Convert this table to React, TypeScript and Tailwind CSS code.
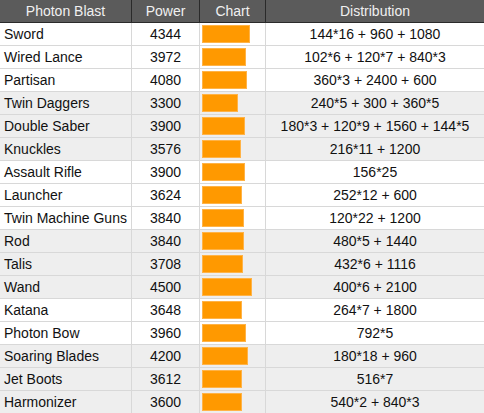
const rows: [string, number, string, boolean][] = [
  ["Sword", 4344, "144*16 + 960 + 1080", false],
  ["Wired Lance", 3972, "102*6 + 120*7 + 840*3", false],
  ["Partisan", 4080, "360*3 + 2400 + 600", false],
  ["Twin Daggers", 3300, "240*5 + 300 + 360*5", true],
  ["Double Saber", 3900, "180*3 + 120*9 + 1560 + 144*5", true],
  ["Knuckles", 3576, "216*11 + 1200", true],
  ["Assault Rifle", 3900, "156*25", false],
  ["Launcher", 3624, "252*12 + 600", false],
  ["Twin Machine Guns", 3840, "120*22 + 1200", false],
  ["Rod", 3840, "480*5 + 1440", true],
  ["Talis", 3708, "432*6 + 1116", true],
  ["Wand", 4500, "400*6 + 2100", true],
  ["Katana", 3648, "264*7 + 1800", false],
  ["Photon Bow", 3960, "792*5", false],
  ["Soaring Blades", 4200, "180*18 + 960", true],
  ["Jet Boots", 3612, "516*7", true],
  ["Harmonizer", 3600, "540*2 + 840*3", true],
];

export default function App() {
  return (
    <div className="w-[484px] h-[413px] overflow-hidden bg-white font-['Liberation_Sans',Arial,sans-serif] text-[14px] leading-none">
      {/* header */}
      <div className="flex h-[23px] bg-[#5b5b5b] text-[#f0f0f0] border-b border-[#2a2a2a]">
        <div className="w-[132px] border-r border-[#2a2a2a] flex items-center justify-center">Photon Blast</div>
        <div className="w-[68px] border-r border-[#2a2a2a] flex items-center justify-center">Power</div>
        <div className="w-[66px] border-r border-[#2a2a2a] flex items-center justify-center">Chart</div>
        <div className="flex-1 flex items-center justify-center">Distribution</div>
      </div>
      {rows.map(([name, power, dist, grey]) => (
        <div
          key={name}
          className={`flex h-[23px] border-b border-[#d8d8d8] text-[#111] ${grey ? "bg-[#eeeeee]" : "bg-white"}`}
        >
          <div className="w-[132px] border-r border-[#d8d8d8] flex items-center pl-[4px]">{name}</div>
          <div className="w-[68px] border-r border-[#d8d8d8] flex items-center justify-center">{power}</div>
          <div className="w-[66px] border-r border-[#d8d8d8] flex items-center pl-[2px]">
            <div
              className="h-[18px] bg-[#ff9900] border border-[#ffb347]"
              style={{ width: Math.round(power * 0.011) }}
            />
          </div>
          <div className="flex-1 flex items-center justify-center">{dist}</div>
        </div>
      ))}
    </div>
  );
}
